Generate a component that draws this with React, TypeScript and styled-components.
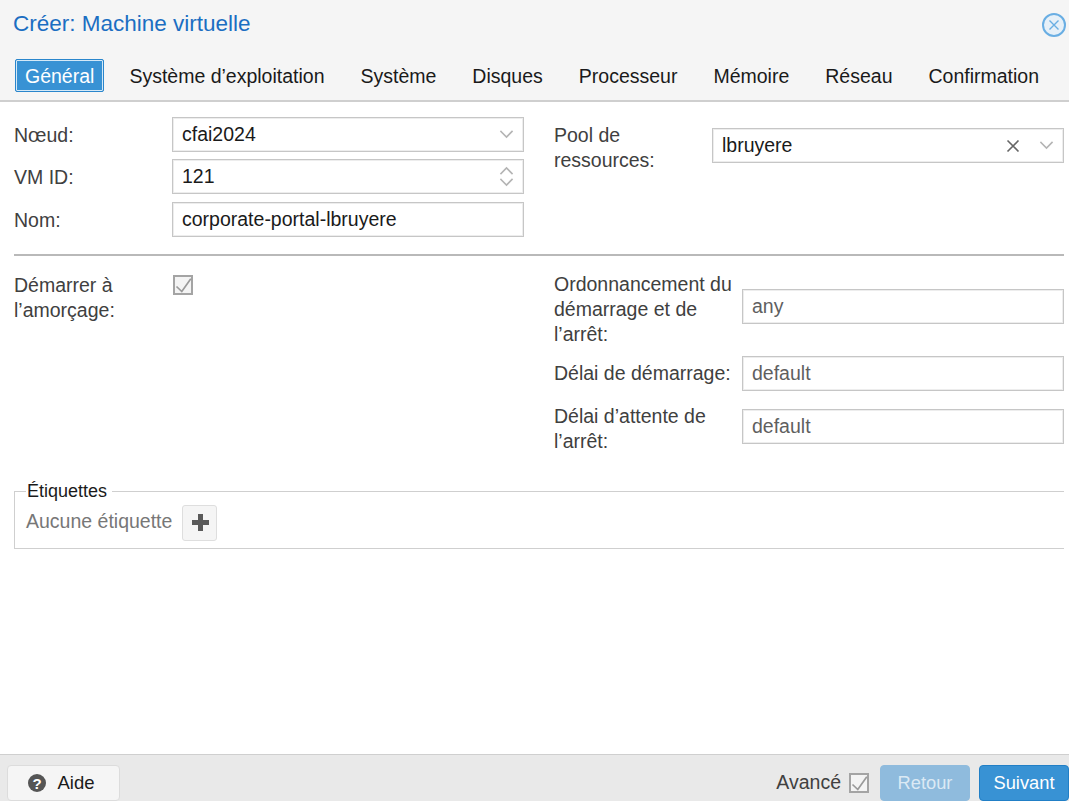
import * as React from "react";
import styled, { createGlobalStyle } from "styled-components";

const Global = createGlobalStyle`
  html, body {
    margin: 0;
    padding: 0;
    height: 100%;
    background: #fff;
  }
  #root { height: 100%; }
  * { box-sizing: border-box; }
`;

const Dialog = styled.div`
  width: 1069px;
  height: 801px;
  display: flex;
  flex-direction: column;
  overflow: hidden;
  font-family: "Liberation Sans", Arial, sans-serif;
  font-size: 19.5px;
  color: #404040;
`;

const Header = styled.header`
  height: 102px;
  flex: none;
  background: #f5f5f5;
  border-bottom: 2px solid #cfcfcf;
  display: flex;
  flex-direction: column;
`;

const TitleRow = styled.div`
  height: 59px;
  padding: 11px 2px 0 13px;
  display: flex;
  justify-content: space-between;
`;

const Title = styled.h1`
  margin: 0;
  font-size: 22.5px;
  line-height: 26px;
  font-weight: 400;
  color: #1b6ec2;
`;

const CloseIcon = styled.svg`
  width: 26px;
  height: 26px;
  margin-top: 1px;
`;

const TabBar = styled.nav`
  display: flex;
  padding-left: 15px;
  gap: 9px;
`;

const Tab = styled.div<{ $active?: boolean }>`
  height: 33px;
  line-height: ${(p) => (p.$active ? "33px" : "35px")};
  padding: 0 ${(p) => (p.$active ? "9px" : "11px")};
  margin-right: 5px;
  white-space: nowrap;
  color: ${(p) => (p.$active ? "#fff" : "#1a1a1a")};
  background: ${(p) => (p.$active ? "#3892d4" : "transparent")};
  border: ${(p) => (p.$active ? "1px solid #2a86cc" : "none")};
  box-shadow: ${(p) => (p.$active ? "inset 0 0 0 1px #d5e9f7" : "none")};
  border-radius: 2px;
`;

const Body = styled.main`
  flex: 1;
  padding: 0 5px 0 14px;
`;

const TopColumns = styled.section`
  display: grid;
  grid-template-columns: 510px 510px;
  column-gap: 30px;
  height: 154px;
  border-bottom: 2px solid #b9b9b9;
  padding-top: 15px;
`;

const Column = styled.div`
  display: flex;
  flex-direction: column;
`;

const RightTop = styled(Column)`
  padding-top: 11px;
`;

const Row = styled.div<{ $labelWidth: number; $gap?: number }>`
  display: grid;
  grid-template-columns: ${(p) => p.$labelWidth}px 1fr;
  align-items: start;
  margin-bottom: ${(p) => p.$gap ?? 0}px;
`;

const Label = styled.label<{ $pad?: number }>`
  line-height: 25px;
  padding-top: ${(p) => p.$pad ?? 6}px;
  color: #404040;
`;

const Field = styled.div<{ $muted?: boolean; $top?: number }>`
  height: 35px;
  margin-top: ${(p) => p.$top ?? 0}px;
  border: 1px solid #c6c6c6;
  box-shadow: inset 0 0 0 1px #ededed;
  background: #fff;
  padding: 0 9px;
  line-height: 30px;
  color: ${(p) => (p.$muted ? "#5f5f5f" : "#1a1a1a")};
  display: flex;
  align-items: center;
  justify-content: space-between;
`;

const FieldText = styled.span`
  position: relative;
  top: -1px;
`;

const Triggers = styled.span`
  display: flex;
  align-items: center;
  gap: 19px;
`;

const Spinner = styled.span`
  display: flex;
  flex-direction: column;
  gap: 3px;
`;

const Glyph = styled.svg`
  display: block;
  fill: none;
  stroke-linecap: square;
`;

const BottomColumns = styled.section`
  display: grid;
  grid-template-columns: 510px 510px;
  column-gap: 30px;
  height: 224px;
  padding-top: 16px;
`;

const CheckRow = styled.div`
  display: grid;
  grid-template-columns: 158px 1fr;
  align-items: start;
`;

const CheckLabel = styled.label`
  line-height: 25px;
  padding-top: 1px;
`;

const CheckSlot = styled.span`
  display: block;
  margin: 3px 0 0 1px;
`;

const TallLabel = styled.label<{ $top?: number }>`
  line-height: 25px;
  margin-top: ${(p) => p.$top ?? 0}px;
`;

const TagFieldset = styled.fieldset`
  margin: 0;
  padding: 0 0 0 11px;
  height: 69px;
  border: 1px solid #cfcfcf;
  border-width: 1px 0 1px 1px;
  display: flex;
`;

const Legend = styled.legend`
  padding: 0 5px 0 1px;
  font-size: 18px;
  line-height: 22px;
  color: #1a1a1a;
`;

const TagRow = styled.div`
  display: flex;
  align-items: center;
  gap: 10px;
  height: 36px;
  margin-top: 3px;
`;

const NoTags = styled.span`
  color: #777;
  position: relative;
  top: -2px;
`;

const AddButton = styled.button`
  width: 35px;
  height: 36px;
  padding: 0 0 2px 1px;
  background: #f5f5f5;
  border: 1px solid #dedede;
  border-radius: 3px;
  display: flex;
  align-items: center;
  justify-content: center;
`;

const Footer = styled.footer`
  height: 47px;
  flex: none;
  background: #e9e9e9;
  border-top: 1px solid #cfcfcf;
  padding: 10px 0 0 7px;
  display: flex;
  align-items: flex-start;
  justify-content: space-between;
`;

const FooterRight = styled.div`
  display: flex;
  align-items: center;
`;

const Advanced = styled.span`
  color: #404040;
  margin-right: 8px;
  position: relative;
  top: -1px;
`;

const AdvancedBox = styled.span`
  display: block;
  margin-right: 11px;
`;

const HelpButton = styled.button`
  width: 113px;
  height: 36px;
  background: #f5f5f5;
  border: 1px solid #dcdcdc;
  border-radius: 4px;
  font: inherit;
  font-size: 18.5px;
  color: #1a1a1a;
  display: flex;
  align-items: center;
  justify-content: center;
  gap: 10px;
  padding: 0 5px 0 0;
`;

const ActionButton = styled.button<{ $disabled?: boolean }>`
  width: 90px;
  height: 36px;
  margin-left: ${(p) => (p.$disabled ? "0" : "9px")};
  background: ${(p) => (p.$disabled ? "#8fbbdd" : "#3892d4")};
  border: 1px solid ${(p) => (p.$disabled ? "#8fbbdd" : "#217fc6")};
  border-radius: 4px;
  color: ${(p) => (p.$disabled ? "#dbe9f4" : "#fff")};
  font: inherit;
  font-size: 18.3px;
  padding: 0;
`;

const Chevron = () => (
  <Glyph width="15" height="9" viewBox="0 0 15 9" stroke="#b4b4b4" strokeWidth="1.6">
    <path d="M2 1.5 L7.5 7 L13 1.5" />
  </Glyph>
);

const ChevronUp = () => (
  <Glyph width="15" height="9" viewBox="0 0 15 9" stroke="#b4b4b4" strokeWidth="1.6">
    <path d="M2 7.5 L7.5 2 L13 7.5" />
  </Glyph>
);

const CheckBox = () => (
  <Glyph width="20" height="20" viewBox="0 0 20 20" stroke="#9a9a9a">
    <rect x="1" y="1" width="18" height="18" strokeWidth="2" stroke="#a4a4a4" fill="#f4f4f4" />
    <path d="M3.5 11.5 L8.8 16.5 L17.8 3.8" strokeWidth="1.7" strokeLinecap="butt" />
  </Glyph>
);

const tabs = [
  "Général",
  "Système d’exploitation",
  "Système",
  "Disques",
  "Processeur",
  "Mémoire",
  "Réseau",
  "Confirmation",
];

export default function App() {
  return (
    <Dialog>
      <Global />
      <Header>
        <TitleRow>
          <Title>Créer: Machine virtuelle</Title>
          <CloseIcon viewBox="0 0 26 26" fill="none">
            <circle cx="13" cy="13" r="11" fill="#e6f0f8" stroke="#69aee3" strokeWidth="2" />
            <path d="M8.5 8.5 L17.5 17.5 M17.5 8.5 L8.5 17.5" stroke="#69aee3" strokeWidth="1.4" />
          </CloseIcon>
        </TitleRow>
        <TabBar>
          {tabs.map((t, i) => (
            <Tab key={t} $active={i === 0}>
              {t}
            </Tab>
          ))}
        </TabBar>
      </Header>
      <Body>
        <TopColumns>
          <Column>
            <Row $labelWidth={158} $gap={7}>
              <Label>Nœud:</Label>
              <Field>
                <FieldText>cfai2024</FieldText>
                <Chevron />
              </Field>
            </Row>
            <Row $labelWidth={158} $gap={8}>
              <Label>VM ID:</Label>
              <Field>
                <FieldText>121</FieldText>
                <Spinner>
                  <ChevronUp />
                  <Chevron />
                </Spinner>
              </Field>
            </Row>
            <Row $labelWidth={158}>
              <Label>Nom:</Label>
              <Field>
                <FieldText>corporate-portal-lbruyere</FieldText>
              </Field>
            </Row>
          </Column>
          <RightTop>
            <Row $labelWidth={158}>
              <TallLabel $top={-5}>
                Pool de
                <br />
                ressources:
              </TallLabel>
              <Field>
                <FieldText>lbruyere</FieldText>
                <Triggers>
                  <Glyph width="14" height="14" viewBox="0 0 14 14" stroke="#666" strokeWidth="1.6">
                    <path d="M1.5 1.5 L12.5 12.5 M12.5 1.5 L1.5 12.5" strokeLinecap="butt" />
                  </Glyph>
                  <Chevron />
                </Triggers>
              </Field>
            </Row>
          </RightTop>
        </TopColumns>
        <BottomColumns>
          <CheckRow>
            <CheckLabel>
              Démarrer à
              <br />
              l’amorçage:
            </CheckLabel>
            <div>
              <CheckSlot>
                <CheckBox />
              </CheckSlot>
            </div>
          </CheckRow>
          <Column>
            <Row $labelWidth={188} $gap={9}>
              <TallLabel>
                Ordonnancement du
                <br />
                démarrage et de
                <br />
                l’arrêt:
              </TallLabel>
              <Field $muted $top={17}>
                <FieldText>any</FieldText>
              </Field>
            </Row>
            <Row $labelWidth={188} $gap={13}>
              <Label $pad={5}>Délai de démarrage:</Label>
              <Field $muted>
                <FieldText>default</FieldText>
              </Field>
            </Row>
            <Row $labelWidth={188}>
              <TallLabel>
                Délai d’attente de
                <br />
                l’arrêt:
              </TallLabel>
              <Field $muted $top={5}>
                <FieldText>default</FieldText>
              </Field>
            </Row>
          </Column>
        </BottomColumns>
        <TagFieldset>
          <Legend>Étiquettes</Legend>
          <TagRow>
            <NoTags>Aucune étiquette</NoTags>
            <AddButton aria-label="Ajouter">
              <svg width="17" height="17" viewBox="0 0 17 17">
                <path d="M6 0 H11 V6 H17 V11 H11 V17 H6 V11 H0 V6 H6 Z" fill="#5a5a5a" />
              </svg>
            </AddButton>
          </TagRow>
        </TagFieldset>
      </Body>
      <Footer>
        <HelpButton>
          <svg width="20" height="20" viewBox="0 0 20 20">
            <circle cx="10" cy="10" r="9" fill="#555" />
            <text x="10" y="15.5" textAnchor="middle" fontSize="15" fontWeight="700" fill="#fff" fontFamily="Liberation Sans">
              ?
            </text>
          </svg>
          Aide
        </HelpButton>
        <FooterRight>
          <Advanced>Avancé</Advanced>
          <AdvancedBox>
            <CheckBox />
          </AdvancedBox>
          <ActionButton $disabled>Retour</ActionButton>
          <ActionButton>Suivant</ActionButton>
        </FooterRight>
      </Footer>
    </Dialog>
  );
}
